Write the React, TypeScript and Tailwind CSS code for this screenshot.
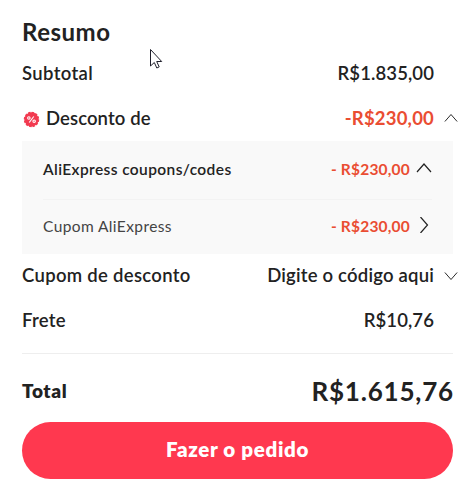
type ChevronDirection = "up" | "down" | "right";

interface ChevronProps {
  direction: ChevronDirection;
  large?: boolean;
}

const CHEVRON_POINTS = {
  up: "1,12 8,4 15,12",
  down: "1,4 8,12 15,4",
  right: "4.5,0 11.5,8 4.5,16",
};

function Chevron({ direction, large }: ChevronProps) {
  return (
    <svg
      viewBox="0 0 16 16"
      className={large ? "mb-[3px] h-4 w-4 shrink-0" : "mb-px h-3.5 w-3.5 shrink-0"}
      fill="none"
      stroke="#222222"
      strokeWidth={large ? 1.2 : 1.1}
    >
      <polyline points={CHEVRON_POINTS[direction]} />
    </svg>
  );
}

function DiscountBadge() {
  return (
    <svg viewBox="0 0 18 18" className="mt-px mr-[6px] ml-px h-[17px] w-[17px] shrink-0">
      <circle cx="9" cy="9" r="7.6" fill="#f23a50" stroke="#f23a50" strokeWidth="1.2" strokeDasharray="2.6 1.38" />
      <g fill="none" stroke="#ffffff" strokeWidth="1.2">
        <circle cx="6.2" cy="7.4" r="1.3" />
        <circle cx="11.8" cy="10.8" r="1.3" />
        <path d="M11.4 5.8 6.6 12.2" />
      </g>
    </svg>
  );
}

function Cursor() {
  return (
    <svg viewBox="0 0 14 22" className="absolute top-[48px] left-[149px] h-[22px] w-[14px]">
      <path
        d="M1.5 1.5V18l3.8-3.5 2.5 5.5 2.4-1.1-2.5-5.4h5z"
        fill="#ffffff"
        stroke="#20202c"
        strokeWidth="1"
      />
    </svg>
  );
}

export default function App() {
  return (
    <main className="relative h-[500px] w-[474px] overflow-hidden bg-white pt-[15px] pl-[22px] font-['Lato',sans-serif] text-[18.5px] font-semibold text-[#222222]">
      <h1 className="flex h-[35px] items-center pb-px text-[24px] font-bold tracking-[0.5px]">Resumo</h1>

      <div className="flex h-[47px] w-[412px] items-center justify-between pt-px">
        <span className="tracking-[0.35px]">Subtotal</span>
        <span className="tracking-[0.1px]">R$1.835,00</span>
      </div>

      <div className="flex h-[44px] w-[436px] items-center pb-px">
        <DiscountBadge />
        <span className="tracking-[0.1px]">Desconto de</span>
        <span className="ml-auto mr-[10px] font-bold tracking-[0.2px] text-[#ea4d32]">-R$230,00</span>
        <Chevron direction="up" />
      </div>

      {/* Detalle de cupones */}
      <section className="h-[113px] w-[431px] bg-[#f9f9f9] px-[21px] text-[15.5px]">
        <div className="flex h-[59px] items-center border-b border-[#f3f3f3] pb-px">
          <span className="tracking-[0.4px]">AliExpress coupons/codes</span>
          <span className="ml-auto mr-[6px] font-bold tracking-[0.2px] text-[#ea4d32]">- R$230,00</span>
          <Chevron direction="up" large />
        </div>
        <div className="flex h-[53px] items-center">
          <span className="font-normal tracking-[0.4px] text-[#444444]">Cupom AliExpress</span>
          <span className="ml-auto mr-[6px] font-bold tracking-[0.2px] text-[#ea4d32]">- R$230,00</span>
          <Chevron direction="right" large />
        </div>
      </section>

      <div className="flex h-[43px] w-[436px] items-center pt-px">
        <span className="tracking-[0.3px]">Cupom de desconto</span>
        <span className="ml-auto mr-[10px] tracking-[0.2px]">Digite o código aqui</span>
        <Chevron direction="down" />
      </div>

      <div className="flex h-[47px] w-[412px] items-center justify-between pt-px">
        <span className="tracking-[0.3px]">Frete</span>
        <span className="tracking-[0.1px]">R$10,76</span>
      </div>

      <div className="mt-[9px] flex h-[69px] w-[431px] items-center justify-between border-t border-[#eeeeee] pt-[7px] font-bold">
        <span className="text-[19px] font-extrabold tracking-[0.6px]">Total</span>
        <span className="-mr-px pb-px text-[26px] tracking-[0.8px]">R$1.615,76</span>
      </div>

      <button
        type="button"
        className="flex h-[57px] w-[431px] items-center justify-center rounded-full bg-[#ff384f] pb-[3px] text-[20.5px] font-extrabold tracking-[0.65px] text-white"
      >
        Fazer o pedido
      </button>

      <Cursor />
    </main>
  );
}
